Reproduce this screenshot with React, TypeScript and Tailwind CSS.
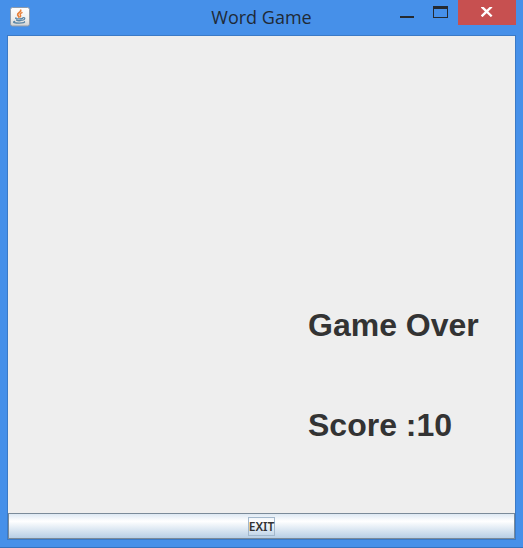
function JavaIcon() {
  return (
    <svg width="20" height="20" viewBox="0 0 20 20" aria-hidden="true">
      <defs>
        <linearGradient id="tile" x1="0" y1="0" x2="0" y2="1">
          <stop offset="0" stopColor="#ffffff" />
          <stop offset="0.6" stopColor="#f0f0ee" />
          <stop offset="1" stopColor="#cfd0d0" />
        </linearGradient>
      </defs>
      <rect x="0.5" y="0.5" width="19" height="18.5" rx="2" fill="url(#tile)" stroke="#8d9aab" />
      <g fill="none" strokeLinecap="round">
        <path d="M10.700 3.200c.9 2-3.700 2.700-3 4.800.2.700.9 1.200 1.300 2" stroke="#e8803a" strokeWidth="1.800" />
        <path d="M12 5.600c-1.800.900-2.300 1.600-1.500 2.600.4.600.2 1.100-.2 1.600" stroke="#e8803a" strokeWidth="1.400" />
        <path d="M6 10.900c-1.200.7 1 1 3.600.9 1.300 0 2.300-.2 2.900-.4M13 10.600c2.400-.4 2.400 1.900-.4 2.600M6.500 13.100c1.300.7 3.900.6 5.200.1M4.700 14.400c-3 1 .3 1.700 4.500 1.700 4 0 6-.7 5.200-1.500" stroke="#5b86a6" strokeWidth="1.300" />
      </g>
    </svg>
  );
}

function TitleBar() {
  return (
    <header className="grid h-[35px] grid-cols-[1fr_auto_1fr] items-start">
      <div className="pt-[7px] pl-[10px]">
        <JavaIcon />
      </div>
      <h1 className="pt-1 font-['Open_Sans',sans-serif] text-lg leading-[26px] text-[#1f2a36]">
        Word Game
      </h1>
      <div className="flex justify-end pr-[7px]">
        <button type="button" aria-label="Minimize" className="flex h-[25px] w-[34px] justify-center pt-4">
          <span className="h-[2px] w-[14px] bg-[#252a30]" />
        </button>
        <button type="button" aria-label="Maximize" className="flex h-[25px] w-[34px] pt-[6px] pl-[9px]">
          <span className="h-3 w-[15px] border border-t-[3px] border-[#252a30]" />
        </button>
        <button type="button" aria-label="Close" className="flex h-[25px] w-[58px] justify-center bg-[#c75050] pt-[7px]">
          <svg width="12" height="10" viewBox="0 0 12 10" aria-hidden="true">
            <path d="M1.500 0.500 9.800 8.500M9.800 0.500 1.500 8.500" stroke="#fff" strokeWidth="2.400" strokeLinecap="square" />
          </svg>
        </button>
      </div>
    </header>
  );
}

export default function App() {
  return (
    <div className="flex min-h-screen flex-col border-b border-[#3572bd] bg-[#4690e9]">
      <TitleBar />
      <main className="mx-[7px] mb-[7px] flex flex-1 flex-col border border-[#3b7ac6] bg-[#eeeeee]">
        <div className="flex flex-1 flex-col gap-[60px] pt-[269px] pl-[300px] font-['Liberation_Sans',Arial,sans-serif] text-[32px] leading-10 font-bold whitespace-nowrap text-[#333333]">
          <p>Game Over</p>
          <p>Score :10</p>
        </div>
        <button
          type="button"
          className="flex h-[26px] items-center justify-center border border-[#7a8a99] bg-linear-to-b from-[#dde8f3] via-white via-30% to-[#b8cfe5]"
        >
          <span className="border border-[#a3b8cc] pt-px font-['Noto_Sans',sans-serif] text-xs leading-4 font-semibold text-[#333333]">
            EXIT
          </span>
        </button>
      </main>
    </div>
  );
}
